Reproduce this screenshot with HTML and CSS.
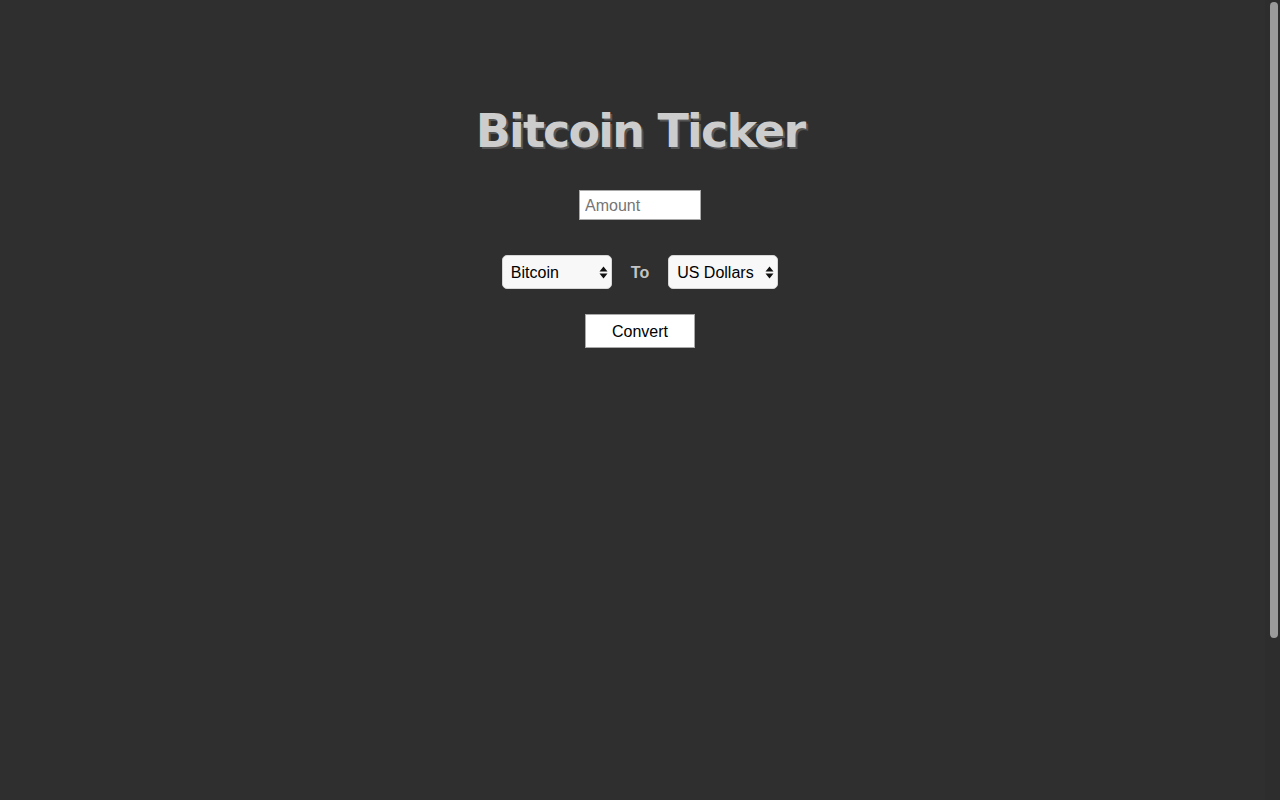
FILE: index.html
```html
<!DOCTYPE html>
<html lang="en">
<head>
<meta charset="utf-8">
<title>Bitcoin Ticker</title>
<link rel="stylesheet" href="styles.css">
</head>
<body>
<main class="app">
  <h1 class="title">Bitcoin Ticker</h1>
  <input class="amount" type="text" placeholder="Amount">
  <div class="row">
    <span class="select-wrap">
      <select class="select"><option>Bitcoin</option><option>Ethereum</option></select>
      <svg class="arrows" width="9" height="13" viewBox="0 0 9 13"><path d="M4.5 0.5 L8.5 5.5 L0.5 5.5 Z M4.5 12.5 L8.5 7.5 L0.5 7.5 Z" fill="#111"/></svg>
    </span>
    <span class="to">To</span>
    <span class="select-wrap">
      <select class="select"><option>US Dollars</option><option>Euros</option></select>
      <svg class="arrows" width="9" height="13" viewBox="0 0 9 13"><path d="M4.5 0.5 L8.5 5.5 L0.5 5.5 Z M4.5 12.5 L8.5 7.5 L0.5 7.5 Z" fill="#111"/></svg>
    </span>
  </div>
  <button class="convert" type="button">Convert</button>
</main>
<div class="scrollbar"><div class="thumb"></div></div>
</body>
</html>
```

FILE: styles.css
```css
html, body {
  margin: 0;
  padding: 0;
  background: #2f2f2f;
  height: 100%;
  overflow: hidden;
}
body {
  font-family: "Liberation Sans", Arial, sans-serif;
}
.app {
  display: flex;
  flex-direction: column;
  align-items: center;
  padding-top: 100px;
}
.title {
  margin: 0;
  font-family: "DejaVu Sans", Verdana, sans-serif;
  font-weight: bold;
  font-size: 46px;
  line-height: 62px;
  color: #cdcdcd;
  letter-spacing: -1.8px;
  text-shadow: 2px 2px 0 #555;
}
.amount {
  margin-top: 28px;
  box-sizing: border-box;
  width: 122px;
  height: 30px;
  border: 1px solid #a9a9a9;
  background: #fff;
  padding: 2px 5px 0;
  font-family: "Liberation Sans", Arial, sans-serif;
  font-size: 16px;
  color: #000;
  outline: none;
}
.amount::placeholder {
  color: #757575;
}
.row {
  margin-top: 35px;
  display: flex;
  align-items: center;
  gap: 19px;
}
.select-wrap {
  position: relative;
  display: inline-block;
}
.select {
  appearance: none;
  -webkit-appearance: none;
  box-sizing: border-box;
  width: 110px;
  height: 34px;
  border: 1px solid #d6d6d6;
  border-radius: 5px;
  background: #f8f8f8;
  padding: 0 8px;
  font-family: "Liberation Sans", Arial, sans-serif;
  font-size: 16px;
  color: #000;
  outline: none;
  display: block;
}
.arrows {
  position: absolute;
  right: 4px;
  top: 11px;
  pointer-events: none;
}
.to {
  font-family: "Liberation Sans", Arial, sans-serif;
  font-weight: bold;
  font-size: 16px;
  color: #c4c4c4;
  padding-top: 2px;
}
.convert {
  margin-top: 25px;
  box-sizing: border-box;
  width: 110px;
  height: 34px;
  border: 1px solid #a9a9a9;
  background: #fff;
  font-family: "Liberation Sans", Arial, sans-serif;
  font-size: 16px;
  color: #000;
  padding: 1px 0 0;
  border-radius: 0;
}
.scrollbar {
  position: absolute;
  top: 0;
  right: 0;
  width: 15px;
  height: 800px;
  background: #2d2d2d;
}
.thumb {
  position: absolute;
  top: 2px;
  left: 5px;
  width: 8px;
  height: 636px;
  border-radius: 4px;
  background: #9a9a9a;
}
```
